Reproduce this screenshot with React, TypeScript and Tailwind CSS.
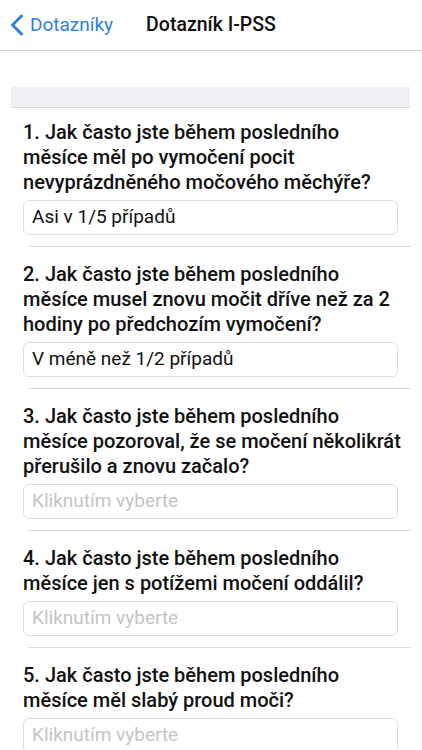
import React from 'react';

interface Question {
  text: string;
  answer?: string;
}

const questions: Question[] = [
  {
    text: '1. Jak často jste během posledního\nměsíce měl po vymočení pocit\nnevyprázdněného močového měchýře?',
    answer: 'Asi v 1/5 případů',
  },
  {
    text: '2. Jak často jste během posledního\nměsíce musel znovu močit dříve než za 2\nhodiny po předchozím vymočení?',
    answer: 'V méně než 1/2 případů',
  },
  {
    text: '3. Jak často jste během posledního\nměsíce pozoroval, že se močení několikrát\npřerušilo a znovu začalo?',
  },
  {
    text: '4. Jak často jste během posledního\nměsíce jen s potížemi močení oddálil?',
  },
  {
    text: '5. Jak často jste během posledního\nměsíce měl slabý proud moči?',
  },
];

const font = { fontFamily: 'Roboto, "Noto Sans", sans-serif' };

const QuestionBlock: React.FC<{ q: Question; first: boolean }> = ({ q, first }) => (
  <div className={first ? 'pt-[12px]' : 'pt-[15px]'}>
    <div className="pl-[23px] pr-[24px]">
      <p className="text-[20px] leading-[25px] font-medium text-[#111] whitespace-pre">
        {q.text}
      </p>
      <div className="mt-[5px] h-[35px] rounded-[6px] border border-[#dedee0] flex items-center pl-[8px]">
        {q.answer ? (
          <span className="text-[19px] text-[#111]">{q.answer}</span>
        ) : (
          <span className="text-[19px] text-[#c4c4c7]">Kliknutím vyberte</span>
        )}
      </div>
    </div>
    <div className="mt-[11px] ml-[28px] mr-[11px] h-px bg-[#dcdce0]" />
  </div>
);

export default function App() {
  return (
    <div className="w-[422px] h-[750px] overflow-hidden bg-white" style={font}>
      <div className="h-[51px] border-b border-[#cfcfd3] flex items-center">
        <div className="flex items-center pl-[10px] text-[#2f7fdc]">
          <svg width="14" height="22" viewBox="0 0 14 22" fill="none">
            <path d="M11.5 2 L2.5 11 L11.5 20" stroke="#2f7fdc" strokeWidth="3" strokeLinecap="round" strokeLinejoin="round" />
          </svg>
          <span className="ml-[6px] text-[19px]">Dotazníky</span>
        </div>
        <span className="ml-[33px] text-[19.5px] font-medium text-[#111]">Dotazník I-PSS</span>
      </div>
      <div className="h-[36px]" />
      <div className="ml-[11px] mr-[12px] h-[21px] bg-[#efeff4] border-b border-[#d9d9dd]" />
      {questions.map((q, i) => (
        <QuestionBlock key={i} q={q} first={i === 0} />
      ))}
    </div>
  );
}
